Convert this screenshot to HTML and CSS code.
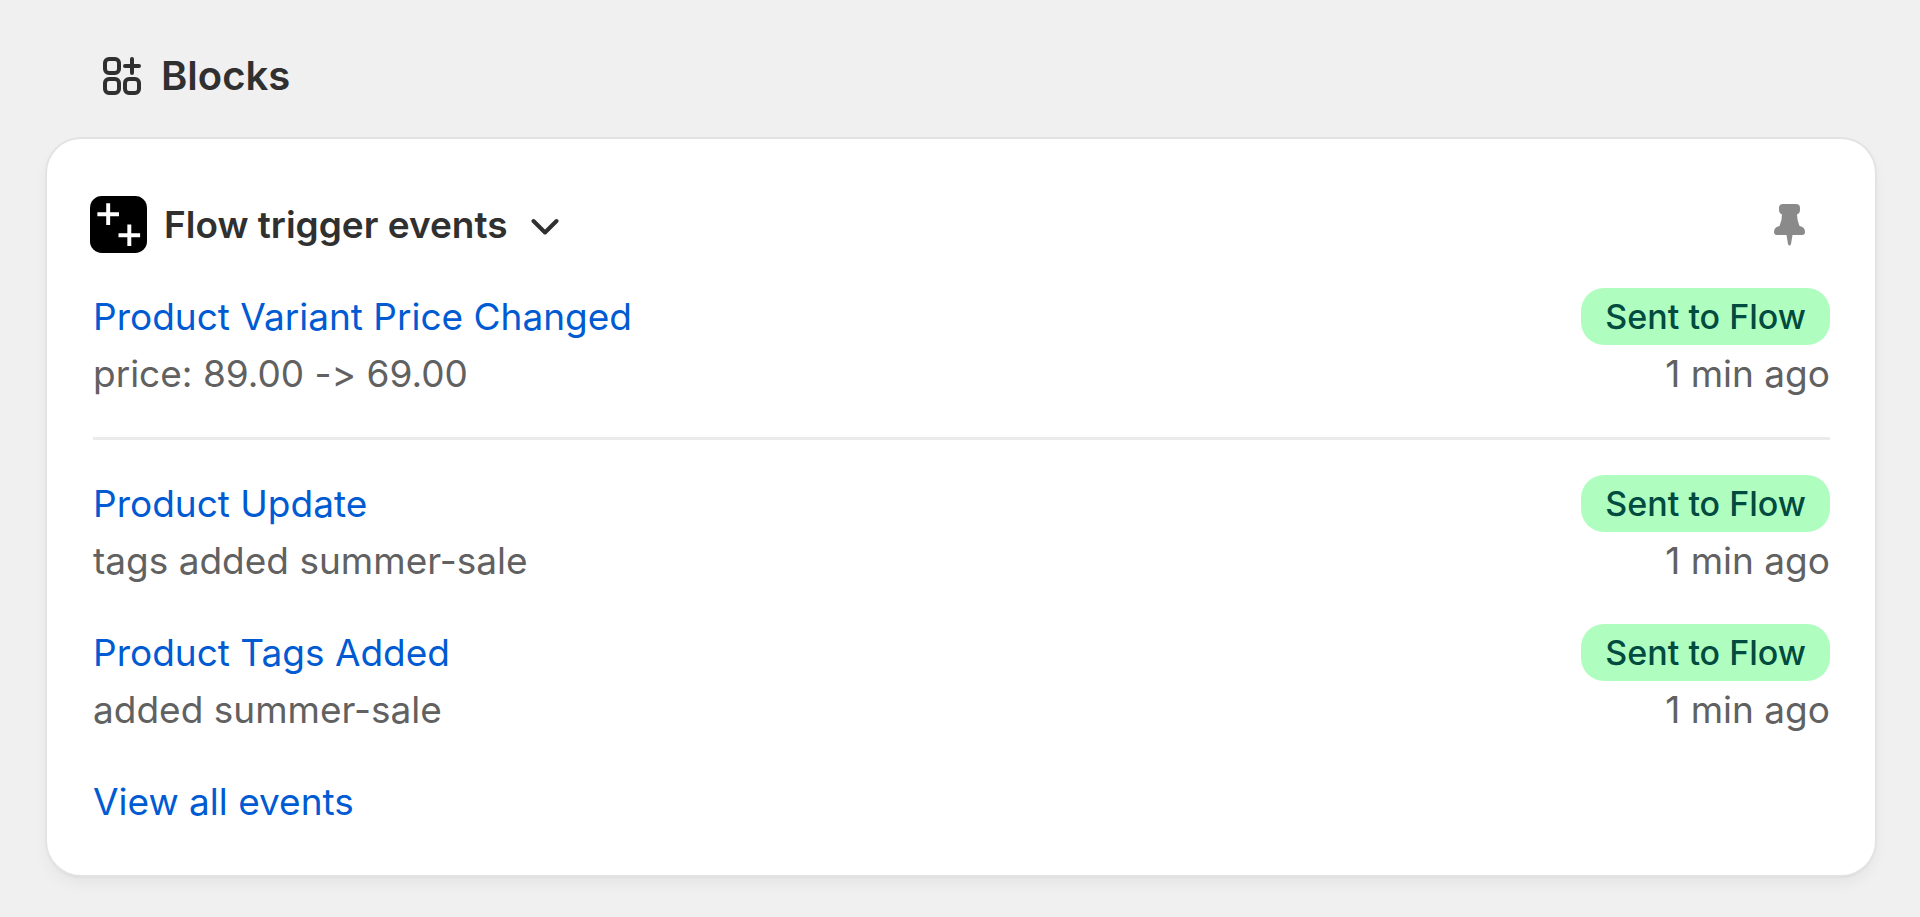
FILE: index.html
```html
<!DOCTYPE html>
<html lang="en">

<head>
    <meta charset="utf-8">
    <title>Blocks</title>
    <link rel="stylesheet" href="styles.css">
</head>

<body>

    <header class="page-header">
        <svg class="blocks-icon" viewBox="0 0 38 38" fill="none" stroke="currentColor" stroke-width="4" stroke-linecap="round" aria-hidden="true">
            <rect x="2" y="2" width="14" height="14" rx="4"/>
            <rect x="2" y="22" width="14" height="14" rx="4"/>
            <rect x="22" y="22" width="14" height="14" rx="4"/>
            <path d="M29 2v14M22 9h14"/>
        </svg>
        <h1 class="page-title">Blocks</h1>
    </header>

    <main class="card">
        <div class="card-header">
            <button class="block-button" type="button">
                <svg class="app-logo" viewBox="0 0 58 58" aria-hidden="true">
                    <rect width="58" height="58" rx="12"/>
                    <path d="M18.500 7.500v22M7.500 18.500h22M40 29v22M29 40h22" stroke="#fff" stroke-width="4"/>
                </svg>
                <span class="block-title">Flow trigger events</span>
                <svg class="chevron" viewBox="0 0 28 18" fill="none" stroke="currentColor" stroke-width="4" stroke-linecap="round" stroke-linejoin="round" aria-hidden="true">
                    <path d="M2.500 3L14 14.500L25.500 3"/>
                </svg>
            </button>
            <button class="pin-button" type="button" aria-label="Unpin block">
                <svg class="pin" viewBox="0 0 32 42" fill="currentColor" aria-hidden="true">
                    <path d="M9 0h13q4 0 4 4v2q0 3-3 4.500q0 6 2.500 11.500q5.500 1 5.500 6q0 3-3 3H18.500l-1.500 9q-.5 1.500-1.500 1.500t-1.500-1.500l-1.500-9H3q-3 0-3-3q0-5 5.500-6Q8 16.500 8 10.500Q5 9 5 6V4q0-4 4-4z"/>
                </svg>
            </button>
        </div>

        <div class="event divided">
            <div class="event-info">
                <a href="#">Product Variant Price Changed</a>
                <span>price: 89.00 -&gt; 69.00</span>
            </div>
            <div class="event-status">
                <span class="badge">Sent to Flow</span>
                <span>1 min ago</span>
            </div>
        </div>

        <div class="event">
            <div class="event-info">
                <a href="#">Product Update</a>
                <span>tags added summer-sale</span>
            </div>
            <div class="event-status">
                <span class="badge">Sent to Flow</span>
                <span>1 min ago</span>
            </div>
        </div>

        <div class="event">
            <div class="event-info">
                <a href="#">Product Tags Added</a>
                <span>added summer-sale</span>
            </div>
            <div class="event-status">
                <span class="badge">Sent to Flow</span>
                <span>1 min ago</span>
            </div>
        </div>

        <a class="view-all" href="#">View all events</a>
    </main>

</body>

</html>
```

FILE: styles.css
```css
body {
    font-family: Inter, sans-serif;
    font-optical-sizing: none;
    font-variant-ligatures: none;
    font-size: 37px;
    line-height: 57px;
    color: #616161;
    background-color: #f0f0f0;
    margin: 0;
    padding: 47px 45px 40px 47px;
}

a {
    color: #005bd3;
    text-decoration: none;
}

a:hover {
    text-decoration: underline;
}

button {
    font: inherit;
    color: inherit;
    background: none;
    border: none;
    padding: 0;
    cursor: pointer;
}

.page-header {
    display: flex;
    align-items: center;
    gap: 20px;
    color: #303030;
    padding: 0 56px;
    margin-bottom: 35px;
}

.blocks-icon {
    width: 38px;
    height: 38px;
}

.page-title {
    font-size: 40px;
    font-weight: 600;
    margin: 0;
}

.card {
    display: flex;
    flex-direction: column;
    gap: 35px;
    background-color: #fff;
    border-radius: 34px;
    padding: 57px 45px 45px 46px;
    box-shadow: 0 0 0 2px #e3e3e3, 0 2px 2px #cccccc, 0 8px 16px rgba(0, 0, 0, 0.05);
}

.card-header {
    display: flex;
    justify-content: space-between;
    align-items: center;
    padding-right: 24px;
    margin-left: -3px;
}

.block-button {
    display: flex;
    align-items: center;
    gap: 17px;
    color: #303030;
}

.app-logo {
    width: 57px;
    height: 57px;
}

.block-title {
    font-weight: 600;
}

.chevron {
    width: 28px;
    height: 18px;
    margin: 4px 0 0 6px;
}

.pin-button {
    display: flex;
    color: #8a8a8a;
}

.pin {
    width: 32px;
    height: 42px;
}

.event {
    display: flex;
    justify-content: space-between;
}

.divided {
    border-bottom: 3px solid #ebebeb;
    padding-bottom: 35px;
}

.event-info,
.event-status {
    display: flex;
    flex-direction: column;
    align-items: flex-start;
}

.event-status {
    align-items: flex-end;
}

.badge {
    font-size: 34px;
    font-weight: 500;
    color: #014b40;
    background-color: #affebf;
    border-radius: 23px;
    padding: 0 24px;
}

.view-all {
    align-self: flex-start;
}
```
